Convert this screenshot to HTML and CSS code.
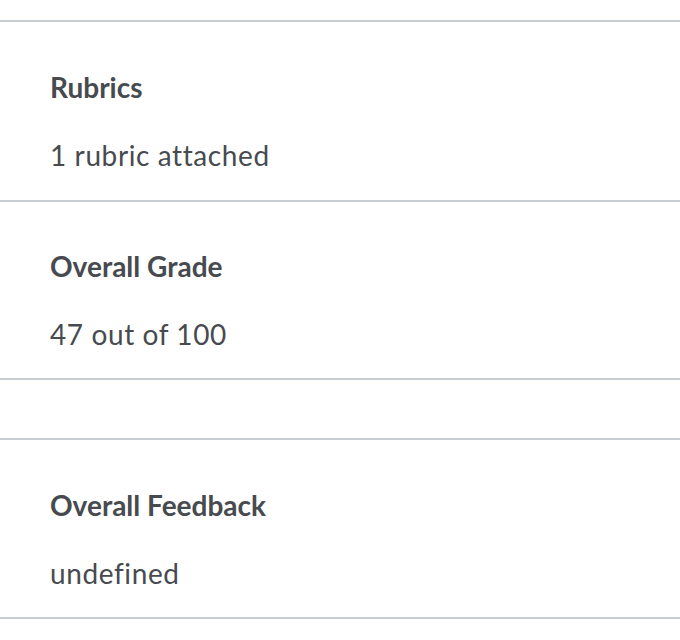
FILE: index.html
```html
<!DOCTYPE html>
<html>
<head>
<meta charset="utf-8">
<link rel="stylesheet" href="styles.css">
</head>
<body>
<div class="panel">
  <section class="block block-first">
    <h2 class="block-title">Rubrics</h2>
    <p class="block-text">1 rubric attached</p>
  </section>
  <section class="block block-second">
    <h2 class="block-title">Overall Grade</h2>
    <p class="block-text">47 out of 100</p>
  </section>
  <section class="block block-empty"></section>
  <section class="block">
    <h2 class="block-title">Overall Feedback</h2>
    <p class="block-text">undefined</p>
  </section>
</div>
</body>
</html>
```

FILE: styles.css
```css
html, body {
  margin: 0;
  padding: 0;
  background: #ffffff;
}
body {
  font-family: Lato, "Noto Sans", sans-serif;
  color: #474b4f;
  font-variant-ligatures: none;
}
.panel {
  padding-top: 20px;
  display: flex;
  flex-direction: column;
}
.block {
  border-top: 2px solid #c7cdd1;
  padding: 44px 50px 0;
  height: 179px;
  box-sizing: border-box;
  display: flex;
  flex-direction: column;
  gap: 26px;
}
.block-first {
  height: 180px;
}
.block-second {
  height: 178px;
  padding-top: 43px;
}
.block:last-child {
  border-bottom: 2px solid #c7cdd1;
  height: 181px;
}
.block-empty {
  height: 60px;
  padding: 0;
}
.block-title {
  margin: 0;
  font-size: 28px;
  line-height: 42px;
  font-weight: 700;
}
.block-text {
  margin: 0;
  font-size: 28px;
  line-height: 42px;
  font-weight: 400;
  letter-spacing: 0.6px;
}
```
